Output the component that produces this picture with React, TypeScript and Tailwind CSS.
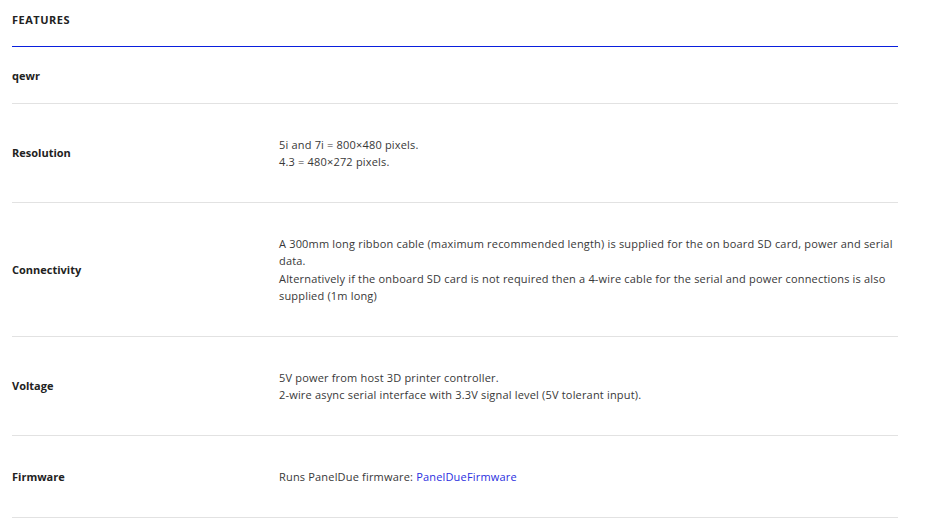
import React from 'react';

type Row = {
  label: string;
  lines?: React.ReactNode[];
};

const rows: Row[] = [
  {
    label: 'Resolution',
    lines: ['5i and 7i = 800×480 pixels.', '4.3 = 480×272 pixels.'],
  },
  {
    label: 'Connectivity',
    lines: [
      'A 300mm long ribbon cable (maximum recommended length) is supplied for the on board SD card, power and serial data.',
      'Alternatively if the onboard SD card is not required then a 4-wire cable for the serial and power connections is also supplied (1m long)',
    ],
  },
  {
    label: 'Voltage',
    lines: [
      '5V power from host 3D printer controller.',
      '2-wire async serial interface with 3.3V signal level (5V tolerant input).',
    ],
  },
  {
    label: 'Firmware',
    lines: [
      <>
        Runs PanelDue firmware:{' '}
        <a href="#" className="text-[#2a2fe0]">
          PanelDueFirmware
        </a>
      </>,
    ],
  },
];

export default function App() {
  return (
    <div className="min-h-[524px] bg-white font-['Open_Sans','Lato',sans-serif] text-[11px] text-[#383838]">
      <div className="ml-[12px] w-[886px]">
        <div className="border-b border-[#0a1fdd] pt-[12px] pb-[19px] text-[11px] font-bold uppercase leading-[15px] tracking-[0.5px] text-[#222]">
          Features
        </div>

        <div className="border-b border-[#e2e2e2] pt-[20px] pb-[19px] text-[11px] font-bold leading-[17px] text-[#222]">
          qewr
        </div>

        {rows.map((row) => (
          <div
            key={row.label}
            className="grid grid-cols-[267px_1fr] items-center border-b border-[#e2e2e2]"
          >
            <div className="pt-[1px] font-bold text-[#222]">{row.label}</div>
            <div className="py-[31.5px] leading-[17.5px] tracking-[0.18px]">
              {row.lines?.map((line, i) => (
                <p key={i}>{line}</p>
              ))}
            </div>
          </div>
        ))}
      </div>
    </div>
  );
}
